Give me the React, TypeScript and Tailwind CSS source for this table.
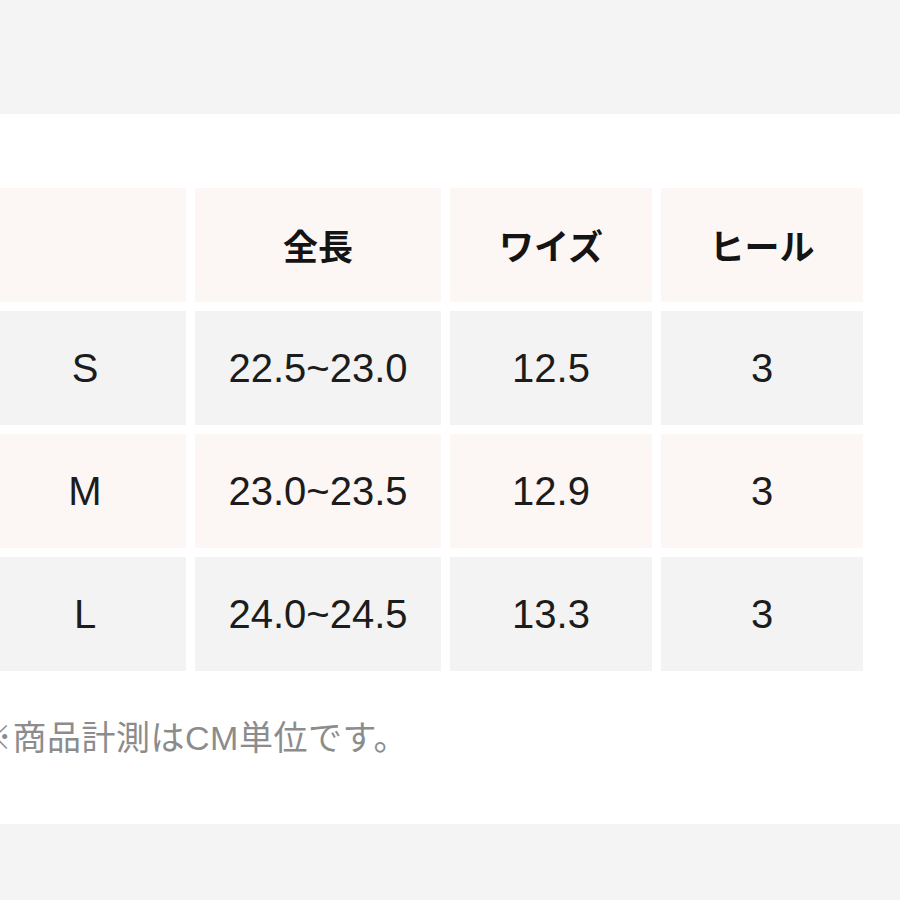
const headers = ['', '全長', 'ワイズ', 'ヒール'];

const rows = [
  { size: 'S', length: '22.5~23.0', width: '12.5', heel: '3', pink: false },
  { size: 'M', length: '23.0~23.5', width: '12.9', heel: '3', pink: true },
  { size: 'L', length: '24.0~24.5', width: '13.3', heel: '3', pink: false },
];

export default function App() {
  return (
    <div className="flex h-[900px] w-[900px] flex-col overflow-hidden bg-white">
      {/* top band */}
      <div className="h-[114px] shrink-0 bg-[#f4f4f4]" />

      <div className="flex-1 overflow-hidden pt-[74px]">
        <div className="ml-[-16px] grid grid-cols-[202px_246px_202px_202px] auto-rows-[114px] gap-[9px]">
          {headers.map((h, i) => (
            <div
              key={i}
              className="flex items-center justify-center bg-[#fcf6f5] text-[35px] font-bold text-[#141414] [font-family:'Noto_Sans_CJK_JP',sans-serif]"
            >
              {h}
            </div>
          ))}
          {rows.map((r) =>
            [r.size, r.length, r.width, r.heel].map((v, i) => (
              <div
                key={r.size + i}
                className={`flex items-center justify-center text-[40px] text-[#1c1c1c] [font-family:'Liberation_Sans',Arial,sans-serif] ${
                  r.pink ? 'bg-[#fcf6f5]' : 'bg-[#f3f3f3]'
                }`}
              >
                {v}
              </div>
            ))
          )}
        </div>

        {/* note, the ※ runs off the left edge like the source */}
        <p className="ml-[-22px] mt-[47px] whitespace-nowrap text-[34px] leading-[40px] tracking-[0.5px] text-[#8c8c8c] [font-family:'Liberation_Sans','Noto_Sans_CJK_JP',sans-serif]">
          ※商品計測はCM単位です。
        </p>
      </div>

      {/* bottom band */}
      <div className="h-[76px] shrink-0 bg-[#f4f4f4]" />
    </div>
  );
}
